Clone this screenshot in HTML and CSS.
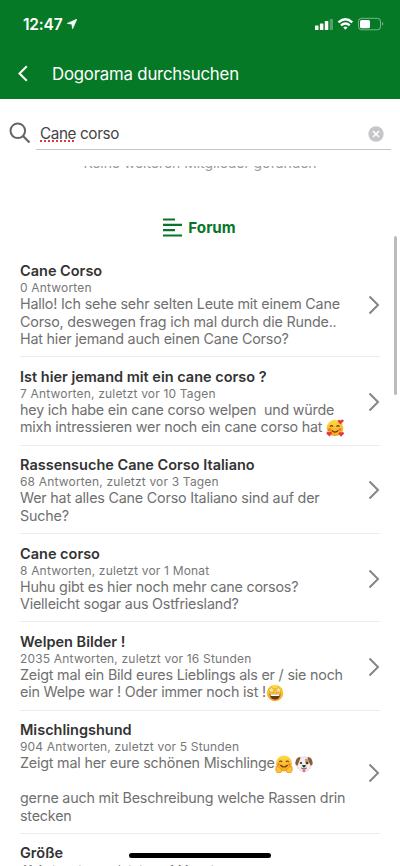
FILE: index.html
```html
<!DOCTYPE html>
<html lang="de">
<head>
<meta charset="utf-8">
<meta name="viewport" content="width=device-width, initial-scale=1">
<title>Dogorama durchsuchen</title>
<link rel="stylesheet" href="styles.css">
</head>
<body>
<svg class="defs" width="0" height="0">
<defs>
<symbol id="next" viewBox="0 0 12 20"><path d="M1.5 1.5 10 10 1.5 18.5" fill="none" stroke="#858585" stroke-width="2"/></symbol>
<linearGradient id="face" x1="0" y1="0" x2="0" y2="1"><stop offset="0" stop-color="#ffdc45"/><stop offset="1" stop-color="#f6a51d"/></linearGradient>
</defs>
</svg>
<div class="phone">
<header class="header">
<div class="status">
<span class="time">12:47</span>
<svg class="location" viewBox="0 0 10 10"><path d="M10 0 0 4.4 4.8 5.2 5.6 10Z" fill="#fff" stroke="#fff" stroke-width=".5"/></svg>
<svg class="signals" viewBox="0 0 70 14">
<g fill="#fff"><rect x="0" y="8.500" width="3.500" height="4.500" rx=".6"/><rect x="4.900" y="6.500" width="3.500" height="6.500" rx=".6"/><rect x="9.800" y="4" width="3.500" height="9" rx=".6"/></g>
<rect x="14.700" y="2" width="3.300" height="11" rx=".6" fill="#fff" opacity=".3"/>
<g fill="none" stroke="#fff" stroke-width="2.300"><path d="M23.500 5.300Q30.400-.7 37.300 5.300M26 8.400Q30.400 4.600 34.800 8.400"/></g><path d="M28.300 10.400Q30.400 8.700 32.500 10.400L30.400 12.800Z" fill="#fff"/>
<rect x="43.500" y="1.300" width="22" height="11.500" rx="3" fill="none" stroke="#fff" opacity=".45"/><rect x="45" y="3" width="10" height="8.200" rx="1.500" fill="#fff"/><path d="M67 5Q69.500 6.900 67 8.800Z" fill="#fff" opacity=".5"/>
</svg>
</div>
<div class="navbar">
<svg class="back" viewBox="0 0 10 17"><path d="M8.800 1.200 1.500 8.500 8.800 15.800" fill="none" stroke="#fff" stroke-width="2"/></svg>
<h1>Dogorama durchsuchen</h1>
</div>
</header>
<div class="search">
<svg class="lens" viewBox="0 0 22 22"><circle cx="8.800" cy="8.800" r="7.300" fill="none" stroke="#666" stroke-width="2"/><path d="m14 14 6.500 6.500" stroke="#666" stroke-width="2.200"/></svg>
<div class="field"><span class="query"><span class="typo">Cane</span> corso</span>
<svg class="clear" viewBox="0 0 16 16"><circle cx="8" cy="8" r="7.700" fill="#c6c6c8"/><path d="m5 5 6 6m0-6-6 6" stroke="#fff" stroke-width="1.500"/></svg></div>
</div>
<main class="results">
<div class="empty"><p>Keine weiteren Mitglieder gefunden</p></div>
<h2 class="section"><svg viewBox="0 0 19 19"><path d="M0 1.500h12M0 6.800h19M0 12.200h12M0 17.500h19" stroke="#08752b" stroke-width="2.200"/></svg><span>Forum</span></h2>
<article class="row"><div class="text"><h3>Cane Corso</h3><p class="meta">0 Antworten</p><p class="body">Hallo! Ich sehe sehr selten Leute mit einem Cane
Corso, deswegen frag ich mal durch die Runde..
Hat hier jemand auch einen Cane Corso?</p></div><svg class="next"><use href="#next"/></svg></article>
<article class="row"><div class="text"><h3>Ist hier jemand mit ein cane corso ?</h3><p class="meta">7 Antworten, zuletzt vor 10 Tagen</p><p class="body">hey ich habe ein cane corso welpen  und würde
mixh intressieren wer noch ein cane corso hat <svg class="emoji" viewBox="0 0 18 18"><circle cx="9" cy="9" r="8.300" fill="url(#face)"/><path d="M4 7.700q1.500-2 3 0M10.500 7.700q1.500-2 3 0M5.800 11.500q3.200 3.200 6.400 0" fill="none" stroke="#743811" stroke-width="1.200"/><g fill="#e53838"><circle cx="3.600" cy="10.500" r="1.600" opacity=".5"/><circle cx="14" cy="10.500" r="1.600" opacity=".5"/><path d="M14.500 5.500 11.800 2.500Q12-.3 14.500 1.500 17.500-.8 17.800 2ZM3.500 17.500.5 14.700Q.5 12 3 13.200 6 12 6 14.500ZM15 17.800 12.500 15Q12.800 12.500 15 13.500 18 12 18 14.800Z"/></g></svg></p></div><svg class="next"><use href="#next"/></svg></article>
<article class="row"><div class="text"><h3>Rassensuche Cane Corso Italiano</h3><p class="meta">68 Antworten, zuletzt vor 3 Tagen</p><p class="body">Wer hat alles Cane Corso Italiano sind auf der
Suche?</p></div><svg class="next"><use href="#next"/></svg></article>
<article class="row"><div class="text"><h3>Cane corso</h3><p class="meta">8 Antworten, zuletzt vor 1 Monat</p><p class="body">Huhu gibt es hier noch mehr cane corsos?
Vielleicht sogar aus Ostfriesland?</p></div><svg class="next"><use href="#next"/></svg></article>
<article class="row"><div class="text"><h3>Welpen Bilder !</h3><p class="meta">2035 Antworten, zuletzt vor 16 Stunden</p><p class="body">Zeigt mal ein Bild eures Lieblings als er / sie noch
ein Welpe war ! Oder immer noch ist !<svg class="emoji" viewBox="0 0 18 18"><circle cx="9" cy="9" r="8.300" fill="url(#face)"/><path d="M3.500 10h11q-.7 5.500-5.500 5.500T3.500 10Z" fill="#713515"/><path d="M4.200 10.200h9.600l-.6 1.900H4.800Z" fill="#fff"/><path d="m5.500 2.600 1.100 2.200 2.300.3-1.700 1.600.4 2.300-2.100-1.100L3.400 9l.4-2.300L2.100 5.100l2.300-.3ZM12.500 2.600l1.100 2.200 2.300.3-1.700 1.600.4 2.300-2.100-1.100L10.400 9l.4-2.300-1.700-1.600 2.300-.3Z" fill="#ffe98c" stroke="#c98722" stroke-width=".5"/></svg></p></div><svg class="next"><use href="#next"/></svg></article>
<article class="row"><div class="text"><h3>Mischlingshund</h3><p class="meta">904 Antworten, zuletzt vor 5 Stunden</p><p class="body">Zeigt mal her eure schönen Mischlinge<svg class="emoji" viewBox="0 0 18 18"><circle cx="9" cy="8.500" r="8" fill="url(#face)"/><path d="M4.300 7q1.400-2 2.800 0M10.900 7q1.400-2 2.800 0M5.300 10q3.700 4 7.400 0" fill="none" stroke="#743811" stroke-width="1.200"/><circle cx="3.600" cy="9.500" r="1.500" fill="#f48a3b"/><circle cx="14.400" cy="9.500" r="1.500" fill="#f48a3b"/><path d="M1 11.500Q4 11 7 15L6 17.500H2Q0 16 1 11.500ZM17 11.500Q14 11 11 15l1 2.500h4q2-1.500 1-6Z" fill="#ffc52f" stroke="#df8518" stroke-width=".6"/></svg><svg class="emoji dog" viewBox="0 0 18 18"><path d="M3.500 4Q9-.5 14.500 4L16 12Q13 17 9 17T2 12Z" fill="#f1eeee" stroke="#c8c2bf" stroke-width=".5"/><path d="M5 2Q1 2 .3 8 .4 11 2.500 10.500 4 7 5.500 3ZM13 2q4 0 4.700 6-.1 3-2.200 2.500Q14 7 12.500 3Z" fill="#8b5b3d"/><path d="M10 4q4-1 4 4-2 3-3.500.5Z" fill="#c49368"/><circle cx="6" cy="8" r="1.100" fill="#222"/><circle cx="12" cy="8" r="1.100" fill="#222"/><path d="M6.700 10.500Q9 9.300 11.300 10.500L9 12.800Z" fill="#222"/><path d="M6 13q3 1.600 6 0" fill="none" stroke="#444" stroke-width=".8"/><path d="M7.700 13.800h2.600v2.500Q9 18.300 7.700 16.300Z" fill="#f36a80"/></svg>

gerne auch mit Beschreibung welche Rassen drin
stecken</p></div><svg class="next"><use href="#next"/></svg></article>
<article class="row"><div class="text"><h3>Größe</h3><p class="meta">41 Antworten, zuletzt vor 1 Monat</p></div></article>
</main>
<div class="scrollbar"></div>
<div class="home"></div>
</div>
</body>
</html>
```
FILE: styles.css
```css
* { box-sizing: border-box; }
body, h1, h2, h3, p { margin: 0; }
body { overflow: hidden; background: #fff; font-family: Inter, "Liberation Sans", sans-serif; }
.defs { display: block; height: 0; }
.phone { position: relative; width: 400px; height: 866px; overflow: hidden; display: flex; flex-direction: column; }
svg { flex: none; }
.header { flex: none; height: 99px; background: #067927; color: #fff; }
.status { height: 48px; padding-left: 23px; display: flex; align-items: center; }
.time { font-size: 15.500px; font-weight: 600; width: 40px; letter-spacing: -.2px; }
.location { width: 10px; height: 10px; margin-left: 4px; }
.signals { width: 70px; height: 14px; margin-left: auto; margin-right: 15px; }
.navbar { height: 51px; display: flex; align-items: center; padding-left: 18px; }
.back { width: 10px; height: 17px; }
h1 { margin-left: 24px; font-size: 16.800px; font-weight: 400; letter-spacing: -.2px; white-space: nowrap; }
.search { flex: none; height: 67px; padding: 17px 9px 0; display: flex; align-items: flex-start; }
.lens { width: 22px; height: 22px; margin-top: 6px; }
.field { flex: 1; margin-left: 5px; height: 34px; padding: 2px 7px 0 4px; border-bottom: 1px solid #c5c5c5; display: flex; align-items: center; justify-content: space-between; color: #444; font-size: 15.300px; letter-spacing: -.4px; }
.typo { text-decoration: underline dotted #dc3c40 2px; text-underline-offset: 1px; text-decoration-skip-ink: none; }
.clear { width: 16px; height: 16px; }
.results { flex: 1; overflow: hidden; }
.empty { height: 45px; overflow: hidden; text-align: center; font-size: 13.900px; line-height: 18px; color: #999; }
.empty p { margin-top: -12px; }
.section { height: 40.500px; padding-top: 6px; display: flex; justify-content: center; align-items: flex-start; gap: 6px; padding-right: 1px; color: #08752b; font-size: 15.200px; line-height: 21px; }
.section svg { width: 19px; height: 19px; margin-top: 1px; }
.row { display: flex; align-items: center; margin: 0 20px; padding: 10.600px 0 8.720px; border-bottom: 1px solid #ececec; }
.text { flex: 1; min-width: 0; white-space: pre; }
h3 { color: #333; font-size: 14.500px; line-height: 18px; font-weight: 600; }
.meta { color: #777; font-size: 12px; line-height: 15px; letter-spacing: .18px; }
.body { color: #707070; font-size: 14.300px; line-height: 17.500px; letter-spacing: -.19px; }
.next { width: 12px; height: 20px; }
.emoji { width: 18px; height: 18px; vertical-align: -3px; margin: -3px 0 -2px; }
.dog { margin-left: 2px; }
.scrollbar { position: absolute; right: 3px; top: 236px; width: 3px; height: 159px; border-radius: 2px; background: #bcbcbc; }
.home { position: absolute; left: 129px; top: 853px; width: 142px; height: 5px; border-radius: 3px; background: #000; }
```
